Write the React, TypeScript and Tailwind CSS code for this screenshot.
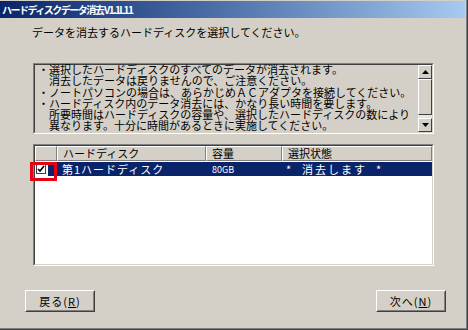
const FONT = { fontFamily: '"MS UI Gothic", "Noto Sans CJK JP", sans-serif' }

const INFO_LINES = [
  '・選択したハードディスクのすべてのデータが消去されます。',
  '　消去したデータは戻りませんので、ご注意ください。',
  '・ノートパソコンの場合は、あらかじめＡＣアダプタを接続してください。',
  '・ハードディスク内のデータ消去には、かなり長い時間を要します。',
  '　所要時間はハードディスクの容量や、選択したハードディスクの数により',
  '　異なります。十分に時間があるときに実施してください。',
]

function Sunken({ className, children }: { className: string; children: React.ReactNode }) {
  return (
    <div className={`border border-t-[#808080] border-l-[#808080] border-r-white border-b-white ${className}`}>
      <div className="h-full border border-t-[#404040] border-l-[#404040] border-r-[#d4d0c8] border-b-[#d4d0c8]">
        {children}
      </div>
    </div>
  )
}

function ScrollBtn({ up }: { up: boolean }) {
  return (
    <div className="w-[14px] h-[14px] bg-[#d4d0c8] border border-t-white border-l-white border-r-[#404040] border-b-[#404040] flex items-center justify-center">
      <svg width="7" height="4" viewBox="0 0 7 4">
        <path d={up ? 'M3.5 0 L7 4 L0 4 Z' : 'M0 0 L7 0 L3.5 4 Z'} fill="#000" />
      </svg>
    </div>
  )
}

function HeaderCell({ w, label }: { w: string; label?: string }) {
  return (
    <div className={`${w} h-full border border-t-white border-l-white border-r-[#808080] border-b-[#808080] px-[5px] flex items-center text-[11px] leading-none text-black`}>
      {label}
    </div>
  )
}

function Button({ label, k }: { label: string; k: string }) {
  return (
    <div className="w-[70px] h-[22px] bg-[#d4d0c8] border border-t-white border-l-white border-r-[#404040] border-b-[#404040]">
      <div className="h-full border border-t-[#d4d0c8] border-l-[#d4d0c8] border-r-[#808080] border-b-[#808080] flex items-center justify-center text-[11px] text-black tracking-[1px]">
        {label}(<span className="underline">{k}</span>)
      </div>
    </div>
  )
}

export default function App() {
  return (
    <div className="w-[468px] h-[330px] bg-[#d4d0c8] border-r border-b border-[#404040]" style={FONT}>
      <div className="h-full border-r border-b border-[#808080] flex flex-col pt-[1px]">
        <div className="h-[17px] mr-[1px] bg-linear-to-r from-[#0a246a] to-[#a6caf0] flex items-center pl-[2px] text-white text-[10px] tracking-[-1.5px] font-bold">
          ハードディスクデータ消去 V1.1L11
        </div>

        <div className="relative flex-1 flex flex-col">
          <div className="mt-[8px] pl-[32px] text-[11px] leading-[13px] text-black">
            データを消去するハードディスクを選択してください。
          </div>

          <Sunken className="mt-[24px] ml-[33px] w-[401px] h-[71px]">
            <div className="h-full flex">
              <div className="flex-1 pl-[3px] -mt-[1px] text-[11px] leading-[11.3px] text-black whitespace-nowrap">
                {INFO_LINES.map((l) => (
                  <div key={l}>{l}</div>
                ))}
              </div>
              <div className="w-[14px] h-full flex flex-col bg-[#e8e6e0]">
                <ScrollBtn up />
                <div className="h-[36px] bg-[#d4d0c8] border border-t-white border-l-white border-r-[#404040] border-b-[#404040]" />
                <div className="flex-1" />
                <ScrollBtn up={false} />
              </div>
            </div>
          </Sunken>

          <Sunken className="mt-[10px] ml-[33px] w-[401px] h-[122px]">
            <div className="h-full bg-white flex flex-col">
              <div className="h-[15px] flex bg-[#d4d0c8]">
                <HeaderCell w="w-[22px]" />
                <HeaderCell w="w-[149px]" label="ハードディスク" />
                <HeaderCell w="w-[76px]" label="容量" />
                <HeaderCell w="flex-1" label="選択状態" />
              </div>
              <div className="h-[14px] mt-[1px] flex items-center text-[11px] leading-none">
                <div className="w-[13px] h-full flex items-center pl-[1px]">
                  <div className="w-[10px] h-[10px] border border-[#404040] bg-white flex items-center justify-center">
                    <svg width="8" height="8" viewBox="0 0 8 8">
                      <path d="M1 4 L3 6 L7 1" stroke="#000" strokeWidth="1.6" fill="none" />
                    </svg>
                  </div>
                </div>
                <div className="flex-1 h-full bg-[#0a246a] text-white flex items-center">
                  <div className="w-[158px] pl-[14px] tracking-[1px]">第1ハードディスク</div>
                  <div className="w-[76px] pl-[6px] text-[9px]">80GB</div>
                  <div className="flex-1 pl-[4px] tracking-[2px] whitespace-pre">*  消去します  *</div>
                </div>
              </div>
            </div>
          </Sunken>

          <div className="absolute left-[30px] top-[144px] w-[27px] h-[19px] border-[3px] border-[#e60012]" />

          <div className="mt-auto mb-[16px] flex justify-between pl-[25px] pr-[20px]">
            <Button label="戻る" k="R" />
            <Button label="次へ" k="N" />
          </div>
        </div>
      </div>
    </div>
  )
}
